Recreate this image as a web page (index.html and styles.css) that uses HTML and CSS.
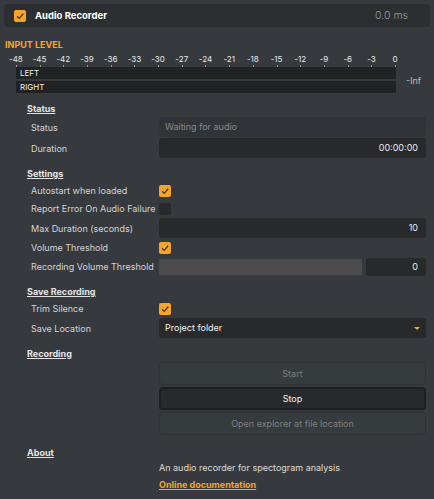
FILE: index.html
```html
<!DOCTYPE html>
<html lang="en">
<head>
    <meta charset="UTF-8">
    <title>Audio Recorder</title>
    <link rel="stylesheet" href="styles.css">
</head>
<body>

    <div class="header">
        <span class="check on"><svg viewBox="0 0 12 12"><polyline points="3,6.2 5.2,8.4 9.2,3.8"/></svg></span>
        <span class="title">Audio Recorder</span>
        <span class="timing">0.0 ms</span>
    </div>

    <div class="input-level">INPUT LEVEL</div>
    <div class="scale">
        <span>-48</span><span>-45</span><span>-42</span><span>-39</span><span>-36</span><span>-33</span>
        <span>-30</span><span>-27</span><span>-24</span><span>-21</span><span>-18</span><span>-15</span>
        <span>-12</span><span>-9</span><span>-6</span><span>-3</span><span>0</span>
    </div>
    <div class="meters">
        <div class="bars">
            <div class="bar">LEFT</div>
            <div class="bar">RIGHT</div>
        </div>
        <div class="inf">-Inf</div>
    </div>

    <div class="section">
        <h3>Status</h3>
        <div class="row"><label>Status</label><div class="field disabled">Waiting for audio</div></div>
        <div class="row"><label>Duration</label><div class="field right">00:00:00</div></div>
    </div>

    <div class="section">
        <h3>Settings</h3>
        <div class="row short"><label>Autostart when loaded</label><span class="check on"><svg viewBox="0 0 12 12"><polyline points="3,6.2 5.2,8.4 9.2,3.8"/></svg></span></div>
        <div class="row short"><label>Report Error On Audio Failure</label><span class="check"></span></div>
        <div class="row"><label>Max Duration (seconds)</label><div class="field right">10</div></div>
        <div class="row short"><label>Volume Threshold</label><span class="check on"><svg viewBox="0 0 12 12"><polyline points="3,6.2 5.2,8.4 9.2,3.8"/></svg></span></div>
        <div class="row slim"><label>Recording Volume Threshold</label>
            <div class="slider-row"><div class="slider"></div><div class="field right small">0</div></div>
        </div>
    </div>

    <div class="section">
        <h3>Save Recording</h3>
        <div class="row short"><label>Trim Silence</label><span class="check on"><svg viewBox="0 0 12 12"><polyline points="3,6.2 5.2,8.4 9.2,3.8"/></svg></span></div>
        <div class="row"><label>Save Location</label><div class="field select">Project folder<span class="arrow"></span></div></div>
    </div>

    <div class="section">
        <h3>Recording</h3>
        <div class="buttons">
            <button class="btn muted">Start</button>
            <button class="btn active">Stop</button>
            <button class="btn muted">Open explorer at file location</button>
        </div>
    </div>

    <div class="section about-section">
        <h3>About</h3>
        <div class="about">
            <p>An audio recorder for spectogram analysis</p>
            <a href="#">Online documentation</a>
        </div>
    </div>

</body>
</html>
```

FILE: styles.css
```css
body { margin: 0; padding: 4px; background-color: #363a3e; color: #d8d8d8; font-family: Inter, "Noto Sans", sans-serif; font-size: 9px; }
.header { display: flex; align-items: center; height: 23px; background-color: #2b2f32; border-radius: 4px; padding: 0 22px 0 10px; }
.title { color: #fff; font-weight: bold; font-size: 9.5px; margin-left: 9px; }
.timing { margin-left: auto; color: #9a9a9a; font-size: 10.5px; font-weight: 300; }
.check { display: inline-block; width: 12px; height: 12px; border-radius: 2px; background-color: #27292b; }
.check.on { background-color: #f7a528; }
.check svg { display: block; width: 12px; height: 12px; fill: none; stroke: #4a3616; stroke-width: 1.3; }
.input-level { color: #f7a528; font-weight: bold; font-size: 9px; line-height: 12px; margin-top: 12px; margin-left: 1px; }
.scale { display: flex; width: 403px; margin-top: 3px; font-size: 8px; line-height: 10px; color: #e8e8e8; }
.scale span { flex: 1; text-align: center; position: relative; padding-bottom: 3px; }
.scale span::after { content: ""; position: absolute; left: 50%; bottom: 0; width: 1px; height: 2px; background-color: #999; }
.meters { display: flex; align-items: center; margin-left: 12px; }
.bars { width: 380px; display: flex; flex-direction: column; gap: 2px; }
.bar { height: 12px; line-height: 12px; background-color: #212223; color: #eee; font-size: 8px; padding-left: 4px; }
.inf { margin-left: 10px; color: #bbb; font-size: 9px; }
.section { margin: 9px 4px 0 23px; }
.about-section { margin-top: 11px; }
.section h3 { margin: 0 0 1px; font-size: 9px; line-height: 14px; font-weight: bold; color: #e4e4e4; text-decoration: underline; }
.row { display: grid; grid-template-columns: 128px 1fr; align-items: center; height: 20px; margin-bottom: 1px; padding-left: 4px; }
.row.short { height: 17px; }
.row.slim { height: 19px; }
.row label { color: #d4d4d4; white-space: nowrap; }
.field { height: 20px; line-height: 20px; box-sizing: border-box; padding: 0 8px 0 6px; background-color: #27292b; border-radius: 3px; color: #ececec; }
.field.disabled { background-color: #303438; color: #888; }
.field.right { text-align: right; }
.field.select { position: relative; color: #f2f2f2; }
.arrow { position: absolute; right: 6px; top: 9px; border-left: 3px solid transparent; border-right: 3px solid transparent; border-top: 3px solid #f7a528; }
.slider-row { display: flex; gap: 4px; align-items: center; }
.slider { flex: 1; height: 16px; background-color: #4b4b4b; }
.field.small { width: 60px; height: 18px; line-height: 18px; }
.buttons { display: flex; flex-direction: column; gap: 2px; margin-left: 132px; margin-top: 1px; }
.btn { height: 23px; font-family: inherit; font-size: 9px; border-radius: 4px; border: 1px solid #2f3336; background-color: #363b3e; color: #7f7f7f; }
.btn.active { border: 2px solid #1d1f20; background-color: #272a2c; color: #f4f4f4; }
.about { margin-left: 132px; margin-top: 1px; }
.about p { margin: 0 0 3px; line-height: 14px; color: #dcdcdc; }
.about a { color: #f7a528; font-weight: bold; text-decoration: underline; line-height: 14px; }
```
